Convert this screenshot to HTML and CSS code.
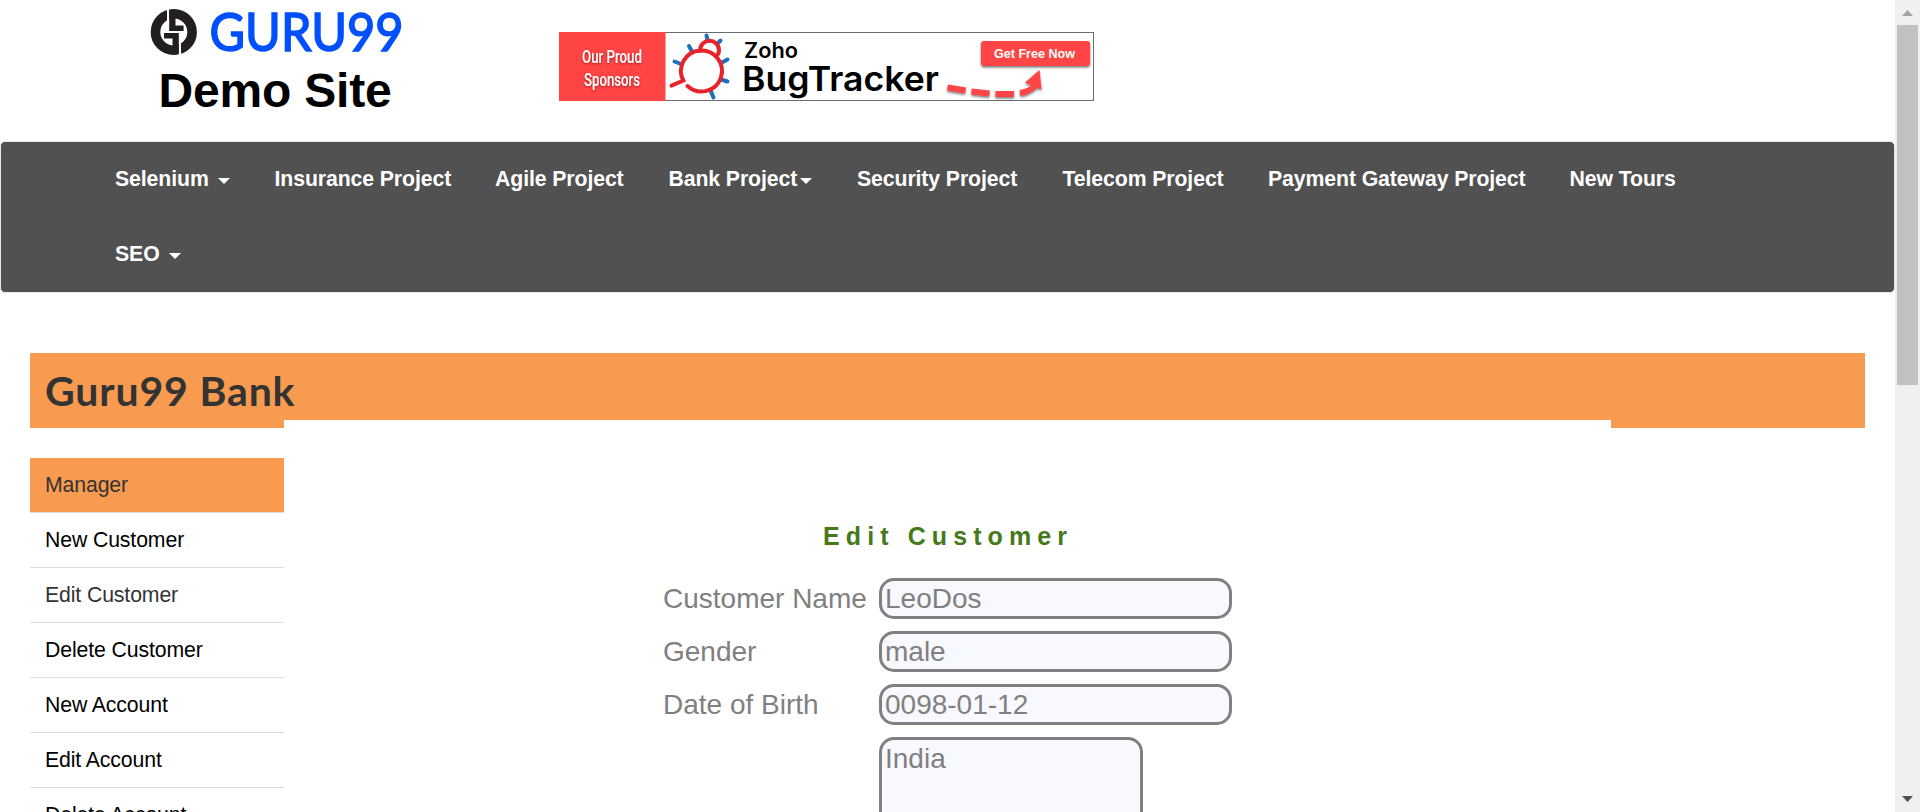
FILE: index.html
```html
<!DOCTYPE html>
<html lang="en">
<head>
<meta charset="utf-8">
<title>Guru99 Bank Edit Customer</title>
<link rel="stylesheet" href="styles.css">
</head>
<body>
<div class="window">
  <main class="page">
    <header class="top">
      <div class="brand">
        <svg class="logo" width="270" height="56" viewBox="0 0 270 56" role="img" aria-label="Guru99">
          <circle cx="23.800" cy="28" r="18.300" fill="#fff" stroke="#231f20" stroke-width="9.600"/>
          <path fill="#fff" d="M17 3H19.200V24H17ZM28.800 32H31V53H28.800Z"/>
          <path fill="#231f20" d="M14 29H28.800V49H22.500V34.500H14ZM33.600 27H19.200V6H25.500V21.500H33.600Z"/>
          <text class="logo-text" x="59.500" y="46.500" textLength="194" lengthAdjust="spacingAndGlyphs">GURU99</text>
        </svg>
        <h2 class="demo">Demo Site</h2>
      </div>
      <svg class="banner" width="535" height="69" viewBox="0 0 535 69">
        <defs>
          <filter id="shade" x="-10%" y="-20%" width="120%" height="160%"><feDropShadow dx="0" dy="1.500" stdDeviation="1" flood-color="#000" flood-opacity=".55"/></filter>
          <filter id="soft" x="-10%" y="-20%" width="120%" height="150%"><feDropShadow dx="0" dy="1" stdDeviation=".8" flood-color="#600" flood-opacity=".6"/></filter>
        </defs>
        <rect x=".5" y=".5" width="534" height="68" fill="#fff" stroke="#6d6d6d"/>
        <rect width="106.500" height="69" fill="#ff4444"/>
        <g class="sponsor" filter="url(#soft)">
          <text x="23" y="31" textLength="60" lengthAdjust="spacingAndGlyphs">Our Proud</text>
          <text x="25" y="53.500" textLength="56" lengthAdjust="spacingAndGlyphs">Sponsors</text>
        </g>
        <g fill="none" stroke-width="4" stroke-linecap="round">
          <path stroke="#1f6fbd" d="M147.500 3.500L148.500 8M161.500 8.500L158.500 11.500M130 14L133.500 20.500M115.500 29.500L122 32M168.500 27.500L162 31M168.500 49.500L162 47.500M154.500 65.500L151.500 58.500"/>
          <path stroke="#e8232a" d="M141 19C141 5.500 160 5.500 160 18.500Q160 22 157 24"/>
          <path stroke="#e8232a" d="M128.500 54A20.500 20.500 0 1 0 124.300 48.500L112.500 53.700"/>
        </g>
        <text class="zoho" x="185" y="25.500" textLength="54" lengthAdjust="spacingAndGlyphs">Zoho</text>
        <text class="tracker" x="183" y="59" textLength="197" lengthAdjust="spacingAndGlyphs">BugTracker</text>
        <g filter="url(#shade)">
          <rect x="422" y="9" width="109" height="25" rx="3" fill="#ff4444"/>
        </g>
        <text class="get" x="435" y="25.500" textLength="81" lengthAdjust="spacingAndGlyphs">Get Free Now</text>
        <g filter="url(#shade)">
          <path fill="none" stroke="#ff4444" stroke-width="6" d="M388.500 55.500L406.500 58.500M412.500 59.500L430.500 61.500M436.500 62L455 62M461 61Q470 60 477 53"/>
          <path d="M480.500 38L466 50.500L482.500 57.500Z" fill="#ff4444"/>
        </g>
      </svg>
    </header>

    <nav class="nav">
      <a class="drop">Selenium</a><a>Insurance Project</a><a>Agile Project</a><a class="drop tight">Bank Project</a><a>Security Project</a><a>Telecom Project</a><a>Payment Gateway Project</a><a>New Tours</a><a class="drop">SEO</a>
    </nav>

    <div class="bank"><h1 class="bank-name">Guru99 Bank</h1></div>

    <div class="content">
      <ul class="menu">
        <li class="active">Manager</li>
        <li>New Customer</li>
        <li class="current">Edit Customer</li>
        <li>Delete Customer</li>
        <li>New Account</li>
        <li>Edit Account</li>
        <li>Delete Account</li>
      </ul>
      <section class="panel">
        <div class="form">
          <p class="title">Edit Customer</p>
          <label>Customer Name</label><div class="field">LeoDos</div>
          <label>Gender</label><div class="field">male</div>
          <label>Date of Birth</label><div class="field">0098-01-12</div>
          <span></span><div class="field area">India</div>
        </div>
      </section>
    </div>
  </main>
  <div class="scrollbar">
    <svg width="11" height="6" viewBox="0 0 11 6"><path d="M0 6L5.500 0L11 6Z" fill="#a3a3a3"/></svg>
    <div class="thumb"></div>
    <svg class="down" width="11" height="6" viewBox="0 0 11 6"><path d="M0 0H11L5.500 6Z" fill="#505050"/></svg>
  </div>
</div>
</body>
</html>
```

FILE: styles.css
```css
* { box-sizing: border-box; }
body { margin: 0; background: #fff; font-family: "Liberation Sans", Arial, sans-serif; color: #333; overflow: hidden; }
.window { display: flex; width: 1920px; height: 812px; overflow: hidden; }
.page { width: 1895px; height: 812px; overflow: hidden; }

.top { display: flex; height: 141px; padding-left: 150px; }
.brand { width: 409px; padding-top: 4px; }
.logo { display: block; overflow: visible; }
.logo-text { font: 400 52px Lato, sans-serif; fill: #0050ff; stroke: #0050ff; stroke-width: 1.6px; }
.demo { margin: 0 0 0 8.5px; font-size: 48px; line-height: 62px; font-weight: 700; letter-spacing: -.2px; color: #000; white-space: nowrap; }
.banner { margin-top: 32px; }
.sponsor { font: 500 18px Roboto, sans-serif; fill: #fff; }
.zoho { font: 600 21px Inter, sans-serif; fill: #000; }
.tracker { font: 600 34.5px Inter, sans-serif; fill: #000; }
.get { font: 700 12.5px "Liberation Sans", sans-serif; fill: #fff; }

.nav {
  display: grid;
  grid-template-columns: 159.5px 220.5px 173.5px 188.5px 205.5px 205.5px 301.5px 200px;
  grid-auto-rows: 75px;
  height: 152px;
  padding-left: 114px;
  background: #515151;
  border: 1px solid #e7e7e7;
  border-radius: 5px;
}
.nav a { color: #fff; font-size: 21.25px; font-weight: 700; letter-spacing: -.1px; line-height: 75px; white-space: nowrap; }
.drop::after {
  content: "";
  display: inline-block;
  margin-left: 9px;
  vertical-align: 2px;
  border: 6px solid transparent;
  border-top-color: #fff;
  border-bottom: 0;
}
.tight::after { margin-left: 3px; }

.bank { height: 75px; margin: 60px 30px 0; padding-left: 15px; background: #f89b50; }
.bank-name { margin: 0; font: 700 41px/75px Lato, sans-serif; letter-spacing: .85px; color: #333; white-space: nowrap; }

.content { display: flex; padding-left: 30px; }
.menu { width: 254px; margin: 30px 0 0; padding: 0; list-style: none; }
.menu li { height: 55px; padding-left: 15px; border-bottom: 1px solid #ddd; color: #000; font-size: 21.25px; letter-spacing: -.12px; line-height: 54px; }
.menu .active { background: #f89b50; color: #333; }
.menu .current { color: #333; }

.panel { width: 1327px; height: 392px; margin-top: -8px; padding: 100px 0 0 379px; background: #fff; }
.form { display: grid; grid-template-columns: 216px 353px; grid-template-rows: 46px; grid-auto-rows: 41px; row-gap: 12px; }
.title { grid-column: 1 / 3; margin: 0; padding-left: 160px; font-size: 25px; line-height: 32px; font-weight: 700; letter-spacing: 6.1px; color: #46791a; white-space: nowrap; }
.form label { font-size: 28px; line-height: 41px; color: #808080; }
.field { height: 41px; padding-left: 3px; border: 3px solid #808080; border-radius: 15px; background: #f8f8ff; color: #808080; font-size: 28px; line-height: 35px; }
.area { width: 264px; height: 120px; padding-top: 1px; }

.scrollbar { display: flex; flex-direction: column; align-items: center; width: 25px; height: 812px; padding: 10px 0; background: #f0f0f0; }
.scrollbar svg { flex: none; display: block; }
.thumb { width: 21px; height: 360px; margin-top: 9px; background: #c1c1c1; }
.down { margin-top: auto; }
```
